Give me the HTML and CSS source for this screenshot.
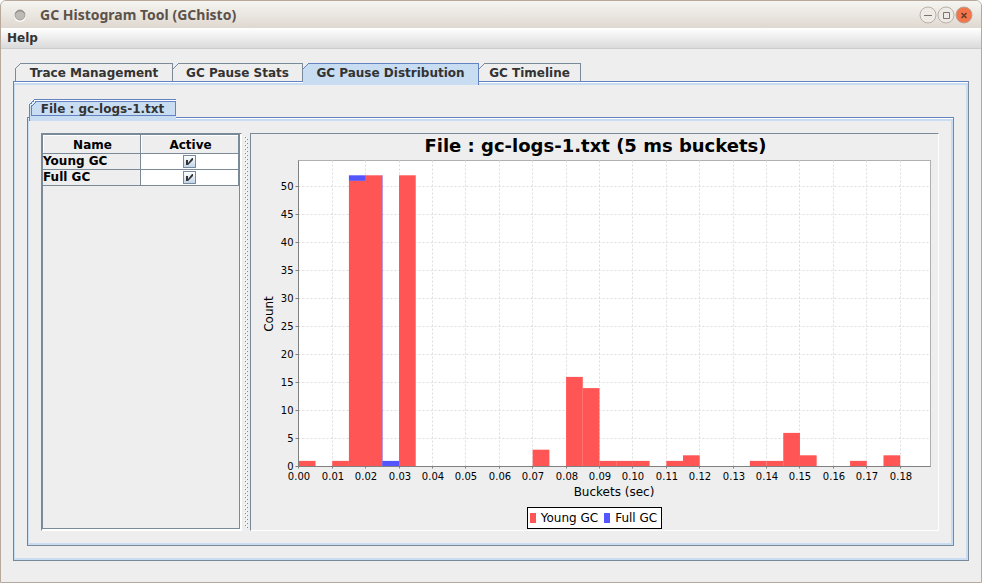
FILE: index.html
```html
<!DOCTYPE html>
<html lang="en">
<head>
<meta charset="utf-8">
<title>GC Histogram Tool (GChisto)</title>
<link rel="stylesheet" href="styles.css">
</head>
<body>
<div class="window">
  <header class="titlebar">
    <svg class="app-icon" width="14" height="14" viewBox="0 0 14 14" aria-hidden="true">
      <circle cx="7" cy="8" r="6" fill="#fbfaf8"/>
      <circle cx="7" cy="7" r="5" fill="#bdbab6" stroke="#a19e9a" stroke-width="1"/>
      <path d="M2.500 5.500A5 5 0 0 1 11.500 5.500" fill="none" stroke="#85827e"/>
    </svg>
    <h1 class="title">GC Histogram Tool (GChisto)</h1>
    <div class="controls">
      <button class="control" aria-label="Minimize"><svg width="18" height="18" viewBox="0 0 18 18"><circle cx="9" cy="9" r="8" fill="#eeebe7" stroke="#b9afa6"/><path d="M5 9.500h8" stroke="#7c756e"/></svg></button>
      <button class="control" aria-label="Maximize"><svg width="18" height="18" viewBox="0 0 18 18"><circle cx="9" cy="9" r="8" fill="#eeebe7" stroke="#b9afa6"/><path d="M6.500 6.500h6v6h-6z" fill="none" stroke="#7c756e"/></svg></button>
      <button class="control" aria-label="Close"><svg width="18" height="18" viewBox="0 0 18 18"><circle cx="9" cy="9" r="8" fill="#f2764a" stroke="#b8a196"/><path d="M6.500 7l5 5M11.500 7l-5 5" stroke="#633c2b" stroke-width="1.500"/></svg></button>
    </div>
  </header>
  <nav class="menubar"><button class="menu">Help</button></nav>

  <main class="content">
    <div class="tabs main-tabs" role="tablist">
      <button class="tab" role="tab"><svg class="corner" width="6" height="6"><path class="cut" d="M0 0h6L0 6z"/><path class="edge" d="M0 6L6 0"/></svg>Trace Management</button>
      <button class="tab" role="tab"><svg class="corner" width="6" height="6"><path class="cut" d="M0 0h6L0 6z"/><path class="edge" d="M0 6L6 0"/></svg>GC Pause Stats</button>
      <button class="tab selected" role="tab" aria-selected="true"><svg class="corner" width="6" height="6"><path class="cut" d="M0 0h6L0 6z"/><path class="edge" d="M0 6L6 0"/></svg>GC Pause Distribution</button>
      <button class="tab" role="tab"><svg class="corner" width="6" height="6"><path class="cut" d="M0 0h6L0 6z"/><path class="edge" d="M0 6L6 0"/></svg>GC Timeline</button>
    </div>
    <section class="pane">
      <div class="pane-body">
        <div class="tabs file-tabs" role="tablist">
          <button class="tab selected focused" role="tab" aria-selected="true"><span class="focus">File : gc-logs-1.txt</span><svg class="corner" width="8" height="8"><path class="cut" d="M0 0h6L0 6z"/><path class="shine" d="M1 7L7 1"/><path class="edge" d="M0 6L6 0M2 8L8 2"/></svg></button>
        </div>
        <section class="pane">
          <div class="pane-body split">
            <div class="side">
              <div class="scroll">
                <table class="collectors">
                  <thead><tr><th>Name</th><th>Active</th></tr></thead>
                  <tbody>
                    <tr><td><label for="young">Young GC</label></td><td class="active"><span class="check"><input type="checkbox" id="young" checked><svg class="mark" width="13" height="13" viewBox="0 0 13 13"><path d="M3 5h2v3L9 3h1v2L5 10H3z" fill="#333"/></svg></span></td></tr>
                    <tr><td><label for="full">Full GC</label></td><td class="active"><span class="check"><input type="checkbox" id="full" checked><svg class="mark" width="13" height="13" viewBox="0 0 13 13"><path d="M3 5h2v3L9 3h1v2L5 10H3z" fill="#333"/></svg></span></td></tr>
                  </tbody>
                </table>
              </div>
            </div>
            <div class="divider">
              <svg class="bumps" aria-hidden="true">
                <defs><pattern id="bump" width="4" height="4" patternUnits="userSpaceOnUse"><path d="M0 0h1v1H0zM2 2h1v1H2z" fill="#fff"/><path d="M1 1h1v1H1zM3 3h1v1H3z" fill="#7a8a99"/></pattern></defs>
                <rect width="100%" height="100%" fill="url(#bump)"/>
              </svg>
            </div>
            <div class="chart">
              <h2 class="chart-title">File : gc-logs-1.txt (5 ms buckets)</h2>
              <svg class="plot" id="plot" viewBox="0 0 687 343" role="img" aria-label="Pause counts per bucket"></svg>
              <div class="legend">
                <span class="key young">Young GC</span>
                <span class="key full">Full GC</span>
              </div>
            </div>
          </div>
        </section>
      </div>
    </section>
  </main>
</div>
<script src="chart.js"></script>
</body>
</html>
```
FILE: styles.css
```css
* { box-sizing: border-box; }

body {
  margin: 0;
  background: #fff;
  color: #333;
  font: bold 12px/16px "DejaVu Sans", sans-serif;
}

button {
  margin: 0;
  padding: 0;
  border: 0;
  background: none;
  color: inherit;
  font: inherit;
}

.window {
  display: flex;
  flex-direction: column;
  min-height: 100vh;
  border: 1px solid #b6a99c;
  border-radius: 6px 6px 0 0;
  background: #eee;
  overflow: hidden;
}

.titlebar {
  display: flex;
  align-items: center;
  height: 27px;
  padding: 0 8px 0 12px;
  background: linear-gradient(#f6f5f2, #dfd8d0);
}

.title {
  flex: 1;
  margin: 0 0 0 13px;
  color: #5c524a;
  font: bold 14px/20px "Noto Sans", sans-serif;
}

.controls { display: flex; }
.control { width: 18px; height: 18px; }
.control svg { display: block; }

.menubar {
  height: 21px;
  padding: 2px 6px;
  border-bottom: 1px solid #ccc;
  background: linear-gradient(#fff, #dadada);
}

.menu { display: block; }

.content {
  display: flex;
  flex: 1;
  flex-direction: column;
  padding: 14px 12px 21px;
}

.tabs {
  display: grid;
  height: 18px;
  padding-left: 2px;
}

.main-tabs { grid-template-columns: 158px 130px 176px 102px; }
.file-tabs { grid-template-columns: 147px; }

.tab {
  position: relative;
  height: 18px;
  border: solid #7a8a99;
  border-width: 1px 1px 0 0;
  text-align: center;
  white-space: nowrap;
}

.tab:first-child { border-left-width: 1px; }

.tab.selected {
  z-index: 1;
  height: 22px;
  padding-bottom: 4px;
  border-color: #6382bf;
  background: #c8ddf2;
}

.tab.focused {
  padding: 1px 0 5px 1px;
  border-right: 0;
  background: linear-gradient(#fff 0 1px, #c8ddf2 1px);
}

.focus {
  display: block;
  height: 15px;
  padding-right: 2px;
  border: 1px solid #6382bf;
  line-height: 14px;
}

.corner { position: absolute; top: -1px; left: 0; }
.tab:first-child .corner { left: -1px; }
.cut { fill: #eee; }
.edge { fill: none; stroke: #7a8a99; }
.selected .edge { stroke: #6382bf; }
.shine { stroke: #fff; }

.pane {
  display: flex;
  flex: 1;
  padding-top: 1px;
  border: 1px solid;
  border-color: #6382bf #7a8a99 #7a8a99 #6382bf;
  background: #fff;
}

.pane-body {
  display: flex;
  flex: 1;
  flex-direction: column;
  min-width: 0;
  padding: 14px 12px 12px;
  border: solid #c8ddf2;
  border-width: 2px 2px 2px 1px;
  background: #eee;
}

.pane-body.split {
  flex-direction: row;
  padding: 12px;
}

.side {
  display: flex;
  flex: 0 0 201px;
  padding-right: 1px;
  padding-bottom: 1px;
  border: 1px solid;
  border-color: #7a8a99 #fff #fff #7a8a99;
}

.scroll {
  flex: 1;
  border: 1px solid #7a8a99;
  box-shadow: 1px 1px 0 #fff;
}

.collectors {
  width: 100%;
  border-collapse: separate;
  border-spacing: 0;
  table-layout: fixed;
  color: #000;
}

.collectors th {
  height: 19px;
  padding: 1px 0 0 2px;
  border: solid #7a8a99;
  border-width: 0 1px 1px 0;
  box-shadow: inset 1px 1px 0 #fff;
}

.collectors td {
  height: 16px;
  padding: 0;
  border: solid #7a8a99;
  border-width: 0 1px 1px 0;
  line-height: 15px;
}

.collectors .active { background: #fff; }
.collectors label { display: block; }

.check {
  display: block;
  position: relative;
  width: 13px;
  height: 13px;
  margin: 0 auto;
}

.check input {
  display: block;
  width: 13px;
  height: 13px;
  margin: 0;
  border: 1px solid #7a8a99;
  background: linear-gradient(#fff, #c0d5ea);
  appearance: none;
}

.mark {
  position: absolute;
  top: 0;
  left: 0;
  pointer-events: none;
}

.divider {
  display: flex;
  flex: 0 0 8px;
  padding: 3px 2px;
}

.bumps { width: 4px; height: auto; }

.chart {
  display: flex;
  flex: 1;
  flex-direction: column;
  align-items: center;
  min-width: 0;
  padding-bottom: 1px;
  border: 1px solid;
  border-color: #7a8a99 #fff #fff #7a8a99;
}

.chart-title {
  margin: 0;
  padding-left: 2px;
  color: #000;
  font-size: 18px;
  line-height: 23px;
}

.plot {
  display: block;
  width: 100%;
  font-weight: normal;
}

.plot .tick { fill: #000; font-size: 10px; }
.plot .name { fill: #000; font-size: 12px; }
.plot .grid { stroke: #ddd; stroke-dasharray: 2 2; }
.plot .axis { stroke: #808080; }
.plot .frame { fill: #fff; stroke: #b0b0b0; }
.plot .young { fill: #f55; }
.plot .full { fill: #55f; }
.middle { text-anchor: middle; }
.end { text-anchor: end; }

.legend {
  display: flex;
  gap: 6px;
  height: 22px;
  margin-top: 7px;
  padding: 2px 4px 2px 2px;
  border: 1px solid #000;
  background: #fff;
  color: #000;
  font-weight: normal;
}

.key {
  display: flex;
  align-items: center;
  gap: 5px;
}

.key::before {
  content: "";
  width: 6px;
  height: 10px;
  background: #f55;
}

.key.full::before { background: #55f; }
```
FILE: chart.js
```js
const plot = document.getElementById("plot");
const left = 47.5, right = 679.5, top0 = 3.5, base = 309.5;
const origin = 47.8, bucket = 16.705, unit = 5.6;

// Bucket index -> [Young GC count, Full GC count]
const counts = {
  0: [1, 0], 2: [1, 0], 3: [51, 1], 4: [52, 0], 5: [0, 1], 6: [52, 0],
  14: [3, 0], 16: [16, 0], 17: [14, 0], 18: [1, 0], 19: [1, 0], 20: [1, 0],
  22: [1, 0], 23: [2, 0], 27: [1, 0], 28: [1, 0], 29: [6, 0], 30: [2, 0],
  33: [1, 0], 35: [2, 0]
};

function add(tag, attrs, text) {
  const el = document.createElementNS("http://www.w3.org/2000/svg", tag);
  for (const key in attrs) el.setAttribute(key, attrs[key]);
  if (text !== undefined) el.textContent = text;
  plot.appendChild(el);
}

function line(cls, x1, y1, x2, y2) {
  add("line", { class: cls, x1, y1, x2, y2 });
}

const snap = v => Math.floor(v) + 0.5;

add("rect", { class: "frame", x: left, y: top0, width: right - left, height: base - top0 });

for (let i = 0; i <= 18; i++) {
  const x = snap(origin + i * 2 * bucket);
  if (i) line("grid", x, base, x, top0);
  line("axis", x, base, x, base + 2);
  add("text", { class: "tick middle", x: x + 0.5, y: 323 }, (i / 100).toFixed(2));
}
for (let n = 0; n <= 50; n += 5) {
  const y = snap(base - n * unit);
  if (n) line("grid", left, y, right, y);
  line("axis", left - 3, y, left, y);
  add("text", { class: "tick end", x: left - 5, y: y + 3.5 }, n);
}

for (const key in counts) {
  const [young, full] = counts[key];
  const x = origin + key * bucket;
  if (full) add("rect", { class: "full", x, y: base - (young + full) * unit, width: bucket, height: full * unit });
  if (young) add("rect", { class: "young", x, y: base - young * unit, width: bucket, height: young * unit });
}

for (const index of [4, 5]) {
  const x = snap(origin + index * bucket);
  add("line", { x1: x, y1: base - 52 * unit, x2: x, y2: base, stroke: "#55f", "stroke-opacity": 0.4 });
}

line("axis", left, top0, left, base);
line("axis", left, base, right, base);
add("text", { class: "name middle", x: 363, y: 339 }, "Buckets (sec)");
add("text", { class: "name middle", transform: "translate(22 157) rotate(-90)" }, "Count");
```
